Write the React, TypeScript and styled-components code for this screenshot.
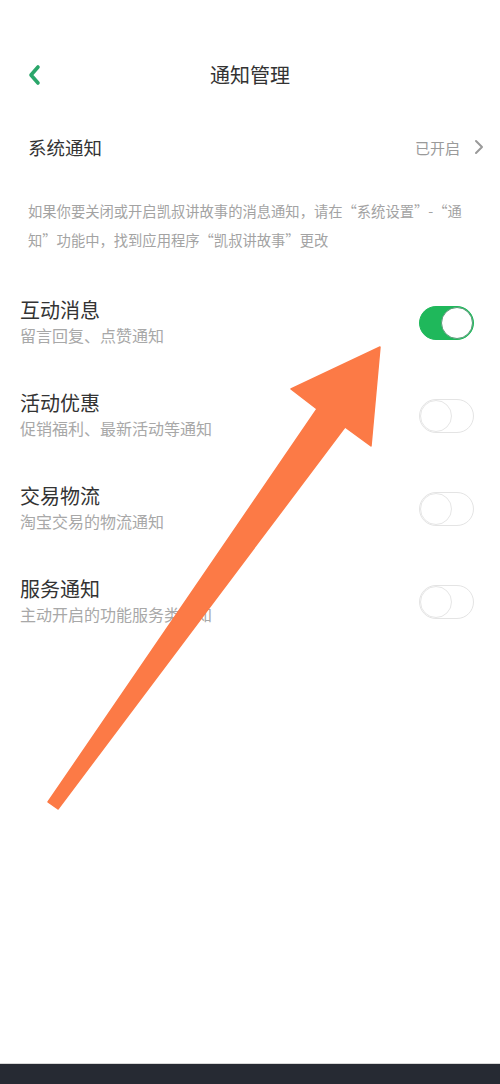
import React from "react";
import styled, { createGlobalStyle } from "styled-components";

const Global = createGlobalStyle`
  html, body { margin: 0; padding: 0; background: #fff; }
  body { font-family: "Noto Sans CJK SC", "Noto Sans", sans-serif; }
  * { box-sizing: border-box; }
`;

const Page = styled.div`
  position: relative;
  width: 500px;
  height: 1084px;
  background: #fff;
  display: flex;
  flex-direction: column;
  overflow: hidden;
`;

const Header = styled.div`
  margin-top: 50px;
  height: 50px;
  display: flex;
  align-items: center;
  justify-content: center;
  position: relative;
`;

const BackBtn = styled.div`
  position: absolute;
  left: 26px;
  top: 14px;
  width: 18px;
  height: 22px;
  display: flex;
`;

const Title = styled.div`
  font-size: 20px;
  color: #333;
  line-height: 26px;
`;

const SysRow = styled.div`
  margin-top: 23px;
  height: 48px;
  padding: 0 16px 0 28px;
  display: flex;
  align-items: center;
  justify-content: space-between;
`;

const SysLabel = styled.div`
  font-size: 18.5px;
  color: #333;
`;

const SysValue = styled.div`
  display: flex;
  align-items: center;
  gap: 14px;
  font-size: 15px;
  color: #9a9a9a;
`;

const Desc = styled.div`
  padding: 0 22px 0 28px;
  margin-top: 25px;
  font-size: 14.3px;
  line-height: 29px;
  color: #a3a3a3;
`;

const List = styled.div`
  margin-top: 43px;
  display: flex;
  flex-direction: column;
  gap: 42px;
  padding: 0 26px 0 20px;
`;

const Row = styled.div`
  display: flex;
  align-items: center;
  justify-content: space-between;
`;

const Texts = styled.div`
  display: flex;
  flex-direction: column;
`;

const RowTitle = styled.div`
  font-size: 20px;
  line-height: 26px;
  color: #333;
`;

const RowSub = styled.div`
  font-size: 16px;
  line-height: 25px;
  color: #a8a8a8;
`;

const Toggle = styled.div<{ $on: boolean }>`
  width: 55px;
  height: 34px;
  border-radius: 17px;
  background: ${(p) => (p.$on ? "#1fb85b" : "#fff")};
  border: 1px solid ${(p) => (p.$on ? "#1fb85b" : "#e4e4e4")};
  display: flex;
  align-items: center;
  justify-content: ${(p) => (p.$on ? "flex-end" : "flex-start")};
`;

const Knob = styled.div<{ $on: boolean }>`
  width: 32px;
  height: 32px;
  border-radius: 50%;
  background: #fff;
  border: 1px solid ${(p) => (p.$on ? "#5a9a78" : "#e6e6e6")};
`;

const Spacer = styled.div`
  flex: 1;
`;

const BottomBar = styled.div`
  height: 21px;
  background: #262a33;
  border-top: 1px solid #d8d8d8;
`;

const Overlay = styled.svg`
  position: absolute;
  left: 0;
  top: 0;
  pointer-events: none;
`;

const items = [
  { t: "互动消息", s: "留言回复、点赞通知", on: true },
  { t: "活动优惠", s: "促销福利、最新活动等通知", on: false },
  { t: "交易物流", s: "淘宝交易的物流通知", on: false },
  { t: "服务通知", s: "主动开启的功能服务类通知", on: false },
];

export default function App() {
  return (
    <Page>
      <Global />
      <Header>
        <BackBtn>
          <svg width="18" height="22" viewBox="0 0 18 22">
            <path d="M12 3 L5 11 L12 19" fill="none" stroke="#2aa66a" strokeWidth="3.6" strokeLinecap="round" strokeLinejoin="round" />
          </svg>
        </BackBtn>
        <Title>通知管理</Title>
      </Header>
      <SysRow>
        <SysLabel>系统通知</SysLabel>
        <SysValue>
          已开启
          <svg width="10" height="16" viewBox="0 0 10 16">
            <path d="M2 2 L8 8 L2 14" fill="none" stroke="#9a9a9a" strokeWidth="2" strokeLinecap="round" strokeLinejoin="round" />
          </svg>
        </SysValue>
      </SysRow>
      <Desc>
        如果你要关闭或开启凯叔讲故事的消息通知，请在“系统设置”-“通知”功能中，找到应用程序“凯叔讲故事”更改
      </Desc>
      <List>
        {items.map((it) => (
          <Row key={it.t}>
            <Texts>
              <RowTitle>{it.t}</RowTitle>
              <RowSub>{it.s}</RowSub>
            </Texts>
            <Toggle $on={it.on}>
              <Knob $on={it.on} />
            </Toggle>
          </Row>
        ))}
      </List>
      <Spacer />
      <BottomBar />
      <Overlay width="500" height="1084" viewBox="0 0 500 1084">
        <polygon
          points="48,802 317,409 291,389 380,347 371,446 345,427 58,809"
          fill="#fc7a46"
          stroke="#fc7a46"
          strokeWidth="1.5"
          strokeLinejoin="round"
        />
      </Overlay>
    </Page>
  );
}
